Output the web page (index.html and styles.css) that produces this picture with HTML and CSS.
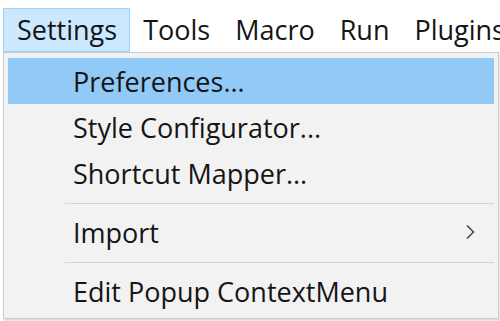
FILE: index.html
```html
<!DOCTYPE html>
<html lang="en">
<head>
<meta charset="UTF-8">
<meta name="viewport" content="width=device-width, initial-scale=1.0">
<title>Settings menu</title>
<link rel="stylesheet" href="styles.css">
</head>
<body>
<div class="menubar">
    <div class="menubar-item active">Settings</div>
    <div class="menubar-item">Tools</div>
    <div class="menubar-item">Macro</div>
    <div class="menubar-item">Run</div>
    <div class="menubar-item">Plugins</div>
</div>
<div class="dropdown">
    <div class="menu-item selected">Preferences...</div>
    <div class="menu-item">Style Configurator...</div>
    <div class="menu-item">Shortcut Mapper...</div>
    <div class="separator"></div>
    <div class="menu-item">
        <span>Import</span>
        <svg class="arrow" width="10" height="16" viewBox="0 0 10 16">
            <path d="M2 1.5 L8.5 8 L2 14.5" fill="none" stroke="#444" stroke-width="1.5"/>
        </svg>
    </div>
    <div class="separator"></div>
    <div class="menu-item">Edit Popup ContextMenu</div>
</div>
</body>
</html>
```

FILE: styles.css
```css
body {
    margin: 0;
    padding: 0;
    background: #ffffff;
    font-family: 'Open Sans', 'Noto Sans', sans-serif;
    font-size: 27px;
    color: #151515;
    overflow: hidden;
    width: 500px;
    height: 321px;
}
.menubar {
    display: flex;
    padding: 8px 0 0 3px;
    white-space: nowrap;
}
.menubar-item {
    padding: 0 11px 0 12px;
    height: 42px;
    line-height: 42px;
    border: 1px solid transparent;
}
.menubar-item.active {
    padding: 0 12px 0 13px;
    background: #cce8ff;
    border-color: #99d1ff;
}
.dropdown {
    margin-left: 3px;
    width: 486px;
    padding: 5px 4px 4px 4px;
    background: #f2f2f2;
    border: 1px solid #cccccc;
    box-shadow: 1px 2px 2px rgba(0, 0, 0, 0.15);
}
.menu-item {
    display: flex;
    align-items: center;
    justify-content: space-between;
    height: 46px;
    padding: 0 19px 0 65px;
    white-space: nowrap;
}
.menu-item.selected {
    background: #91c9f7;
}
.separator {
    height: 1px;
    margin: 7px 0 5px 57px;
    background: #d5d5d5;
}
```
